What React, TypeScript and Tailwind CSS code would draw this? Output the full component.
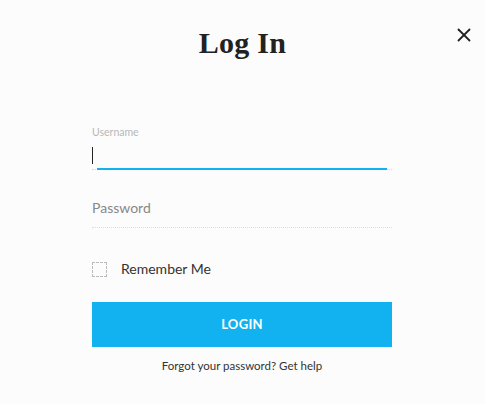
import { X } from 'lucide-react';

export default function App() {
  return (
    <div className="w-[485px] h-[404px] bg-[#fcfcfc] relative font-['Lato',sans-serif] overflow-hidden">
      <button className="absolute left-[453px] top-[24px] text-[#222]">
        <X className="w-[22px] h-[22px]" strokeWidth={2} />
      </button>

      <h1 className="pt-[24px] text-center text-[30px] leading-[38px] font-bold text-[#222] font-['Liberation_Serif','DejaVu_Serif',serif] tracking-[0.3px]">
        Log In
      </h1>

      <form className="w-[300px] ml-[92px] mt-[64px]">
        <div className="relative">
          <label className="block text-[10.5px] leading-[12px] text-[#b8b8b8]">Username</label>
          <div className="h-[31px] relative">
            <span className="absolute left-0 top-[9px] w-px h-[17px] bg-[#222]" />
          </div>
          <div className="border-b border-dotted border-[#d8d8d8]" />
          <div className="absolute left-[5px] right-[5px] bottom-0 h-[2px] bg-[#12b1ef]" />
        </div>

        <div className="mt-[30px] text-[14px] leading-[16px] text-[#888]">Password</div>
        <div className="mt-[11px] border-b border-dotted border-[#dcdcdc]" />

        <label className="mt-[33px] flex items-center">
          <span className="w-[15px] h-[15px] border border-dashed border-[#bbb]" />
          <span className="ml-[14px] text-[14px] leading-[16px] text-[#333]">Remember Me</span>
        </label>

        <button
          type="button"
          className="mt-[25px] w-full h-[45px] bg-[#12b1ef] text-white font-bold text-[13px] tracking-[0.3px]"
        >
          LOGIN
        </button>

        <p className="mt-[12px] text-center text-[11.5px] leading-[14px] text-[#333]">
          Forgot your password? Get help
        </p>
      </form>
    </div>
  );
}
